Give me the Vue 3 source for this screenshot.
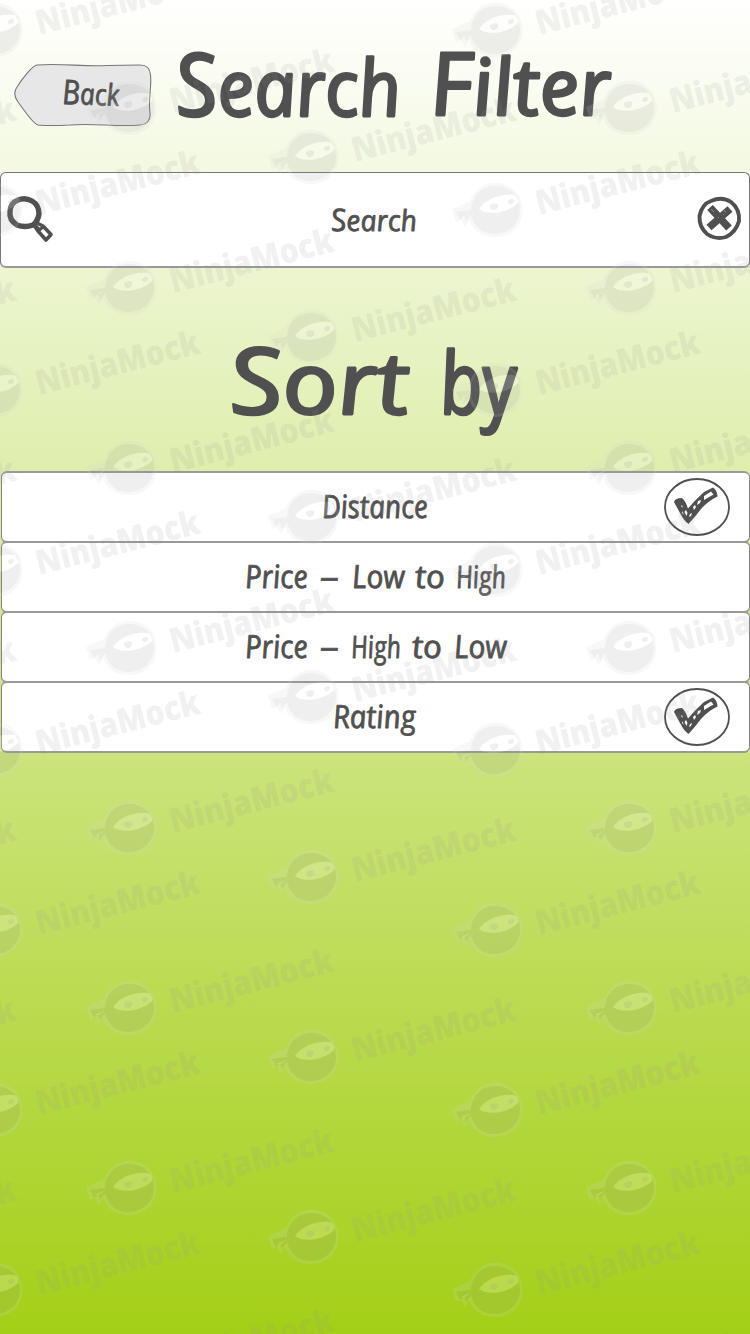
<script setup>
const title = [
  { cap: 'S', rest: 'earch', x: 179, y: 116, w: 225 },
  { cap: 'F', rest: 'ilter', x: 433, y: 115, w: 181 },
]
const sortTitle = [
  { cap: 'S', rest: 'ort', x: 233, w: 179 },
  { cap: '', rest: 'by', x: 443, w: 77 },
]
const options = [
  { words: [{ t: 'Distance', x: 323, w: 106 }], checked: true },
  {
    words: [
      { t: 'Price', x: 246, w: 63 }, { t: '–', x: 321, w: 19 }, { t: 'Low', x: 353, w: 53 },
      { t: 'to', x: 416, w: 30 }, { t: 'High', x: 457, w: 50, s: 31 },
    ],
    checked: false,
  },
  {
    words: [
      { t: 'Price', x: 246, w: 63 }, { t: '–', x: 321, w: 19 }, { t: 'High', x: 352, w: 50, s: 31 },
      { t: 'to', x: 413, w: 30 }, { t: 'Low', x: 455, w: 53 },
    ],
    checked: false,
  },
  { words: [{ t: 'Rating', x: 334, w: 83 }], checked: true },
]

const marks = []
for (let row = 0; row < 8; row++) {
  for (const [x, y] of [[-5, 30], [495, 30], [129, 108], [629, 108], [-189, 157], [311, 157], [-371, 108]]) {
    marks.push({ x: x - 1, y: y + row * 180 })
  }
}
marks.push({ x: 128, y: -72 }, { x: 628, y: -72 })
</script>

<template>
  <main class="screen">
    <header class="header">
      <button class="back" aria-label="Back">
        <svg width="140" height="64" viewBox="13 63 140 64">
          <path class="tag" d="M37 65 C62 63 84 67 108 65.500 L140 65 Q150 65 150.500 75 C152 86 148 99 150 113 Q151 124 140 125 C116 127 94 123 70 125 Q50 126 38 125 C33 124 24 110 18 102 Q12 94 17 87 C22 79 32 66 37 65Z" />
          <text class="hand small" transform="translate(63 104) rotate(2) skewX(7)" textLength="57" lengthAdjust="spacingAndGlyphs" font-size="34">B<tspan font-size="30">ack</tspan></text>
        </svg>
      </button>
      <h1>
        <svg width="597" height="172" viewBox="153 0 597 172">
          <text v-for="w in title" :key="w.rest" class="hand large" :transform="`translate(${w.x} ${w.y}) skewX(8)`" :textLength="w.w" lengthAdjust="spacingAndGlyphs" font-size="78"><tspan font-size="87">{{ w.cap }}</tspan>{{ w.rest }}</text>
        </svg>
      </h1>
    </header>

    <section class="search">
      <svg class="cell" width="748" height="93" viewBox="1 173 748 93">
        <text class="hand small" transform="translate(332 231) skewX(7)" textLength="86" lengthAdjust="spacingAndGlyphs" font-size="31">S<tspan font-size="29">earch</tspan></text>
      </svg>
      <svg class="cell start" width="54" height="93" viewBox="1 173 54 93">
        <path class="ink" stroke-width="5.400" d="M18 200 Q25 197 32 201 Q39 205 39 214 Q38 221 33 225 Q25 228 17 225 Q9 220 10 212 Q10 203 18 200Z" />
        <path class="ink" stroke-width="3.600" d="M34 225 L38 231 L46 240 L51 234.500 L43 226 L37 223Z" />
        <path class="ink" stroke-width="3" d="M34 224 L40 230 M38 231 L43 227" />
      </svg>
      <svg class="cell end" width="56" height="93" viewBox="693 173 56 93">
        <path class="ink" stroke-width="3.900" d="M711 201 Q722 196 731 202 Q740 209 739 221 Q736 232 726 237 Q716 240 707 234 Q699 227 699.500 216 Q702 204 711 201Z" />
        <path class="ink" stroke-width="7.600" stroke-linecap="butt" d="M710 207.500 L729 228 M730 209 L709 227.500" />
        <path stroke="#aaa" stroke-width=".7" d="M711 209 l3 3 M718 217 l1 1 M724 211 l2 1 M723 214 l1 1" />
      </svg>
    </section>

    <h2 class="sort">
      <svg width="750" height="203" viewBox="0 268 750 203">
        <text v-for="w in sortTitle" :key="w.rest" class="hand large" :transform="`translate(${w.x} 414) skewX(8)`" :textLength="w.w" lengthAdjust="spacingAndGlyphs" font-size="86"><tspan font-size="92">{{ w.cap }}</tspan>{{ w.rest }}</text>
      </svg>
    </h2>

    <ul class="options">
      <li v-for="(o, i) in options" :key="i" class="option">
        <svg class="cell" width="747" height="68" viewBox="2 473 747 68">
          <text v-for="w in o.words" :key="w.t" class="hand small" :transform="`translate(${w.x} 518) skewX(7)`" :textLength="w.w" lengthAdjust="spacingAndGlyphs" :font-size="w.s || 32">{{ w.t }}</text>
        </svg>
        <svg v-if="o.checked" class="cell end" width="91" height="68" viewBox="658 473 91 68">
          <ellipse cx="697" cy="507" rx="32" ry="28" class="ink" stroke-width="1.800" />
          <path class="solid" d="M674 502 Q675 498 682 498 Q685 500 688 508.500 Q696 499 704 492 L713 487.500 Q717 490 717.500 496.500 Q708 501 701 509 Q695 517 688.500 524 Q684 521 680 513Z" />
          <path fill="#fff" d="M704 496 L711 491.500 L713.500 494.500 L704 500Z M698 501 l3 -1 l-1 3 l-3 2Z M693 507 l2 -2 l1 2 l-2 3Z M686 510 l1.500 3 l-1 3 l-2 -4Z M690 514 l2 -1 l-1 3 l-2 1Z M682 505 l1 3 l-2 -2Z M682 511 l2 4 l-2 -2Z" />
        </svg>
      </li>
    </ul>

    <svg class="watermark" width="750" height="1334" viewBox="0 0 750 1334" aria-hidden="true">
      <defs>
        <g id="ninja">
          <path class="halo" fill-rule="evenodd" d="M-24 -9 C-19 -23 -6 -29 6 -27 C22 -24 31 -10 28 6 C25 20 13 28 -2 27 C-14 26 -22 19 -25 10 L-29 17 L-33 10 L-38 12 L-42 -1Z M-23 0 L-38 2 L-34 10 L-30 6 L-28 12 L-23 5 C-20 18 -10 24 0 24 C14 24 26 14 26 0 C26 -15 15 -24 1 -24 C-12 -24 -22 -15 -23 0Z" />
          <path class="shade" fill-rule="evenodd" d="M-23 0 C-22 -15 -12 -24 1 -24 C15 -24 26 -15 26 0 C26 14 14 24 0 24 C-10 24 -20 18 -23 5 L-28 12 L-30 6 L-34 10 L-38 2Z M-15 -1 C-8 -12 11 -18 23 -14 Q25 -10 24 -7 C14 3 -6 6 -15 -1Z" />
          <path class="band" d="M-15 -1 C-8 -12 11 -18 23 -14 Q25 -10 24 -7 C14 3 -6 6 -15 -1Z" />
          <path class="shade eye" d="M-4 -5 Q0 -8 4 -6 Q5 -2 1 0 Q-4 1 -4 -5Z M14 -9 Q18 -13 20 -10 Q20 -6 16 -6 Q14 -6 14 -9Z" />
          <path class="band" d="M-33 7 L-22 2 L-29 7Z" />
          <text class="brand" transform="translate(45 5) rotate(-14.500)" textLength="168" lengthAdjust="spacingAndGlyphs">NinjaMock</text>
        </g>
      </defs>
      <use v-for="(m, i) in marks" :key="i" href="#ninja" :x="m.x" :y="m.y" />
    </svg>
  </main>
</template>

<style>
body { margin: 0; }
</style>

<style scoped>
.screen {
  position: relative;
  width: 750px;
  height: 1334px;
  overflow: hidden;
  background: linear-gradient(#ffffff, #a4cf17);
}
svg { display: block; }
h1, h2, ul { margin: 0; padding: 0; }
.header { display: flex; height: 172px; }
.back { margin: 63px 0 0 13px; padding: 0; width: 140px; height: 64px; border: 0; background: none; }
.tag { fill: #e7e7e7; stroke: #777; stroke-width: 1.1; }
.hand {
  font-family: "Open Sans", "Noto Sans", sans-serif;
  font-style: italic;
  font-weight: 400;
  fill: #505050;
  stroke: #505050;
  stroke-linejoin: round;
}
.small { stroke-width: .8px; }
.large { stroke-width: 2.8px; }
.ink { fill: none; stroke: #505050; stroke-linejoin: round; }
.solid { fill: #505050; }
.search {
  display: grid;
  box-sizing: border-box;
  height: 96px;
  background: #fff;
  border: 1px solid #777;
  border-bottom: 2px solid #999;
  border-radius: 6px;
}
.cell { grid-area: 1 / 1; }
.start { justify-self: start; }
.end { justify-self: end; }
.sort { height: 203px; }
.options { list-style: none; padding-left: 1px; }
.option {
  display: grid;
  box-sizing: border-box;
  height: 72px;
  margin-bottom: -2px;
  background: #fff;
  border: 1px solid #858585;
  border-top: 2px solid #999;
  border-bottom: 2px solid #999;
  border-radius: 6px;
}
.watermark { position: absolute; inset: 0; pointer-events: none; }
.shade { fill: rgba(150, 150, 150, .15); }
.halo { fill: rgba(215, 215, 215, .17); }
.band { fill: rgba(255, 255, 255, .2); }
.brand {
  font: 800 34px "Open Sans", "Noto Sans", sans-serif;
  fill: rgba(150, 150, 150, .15);
}
</style>
